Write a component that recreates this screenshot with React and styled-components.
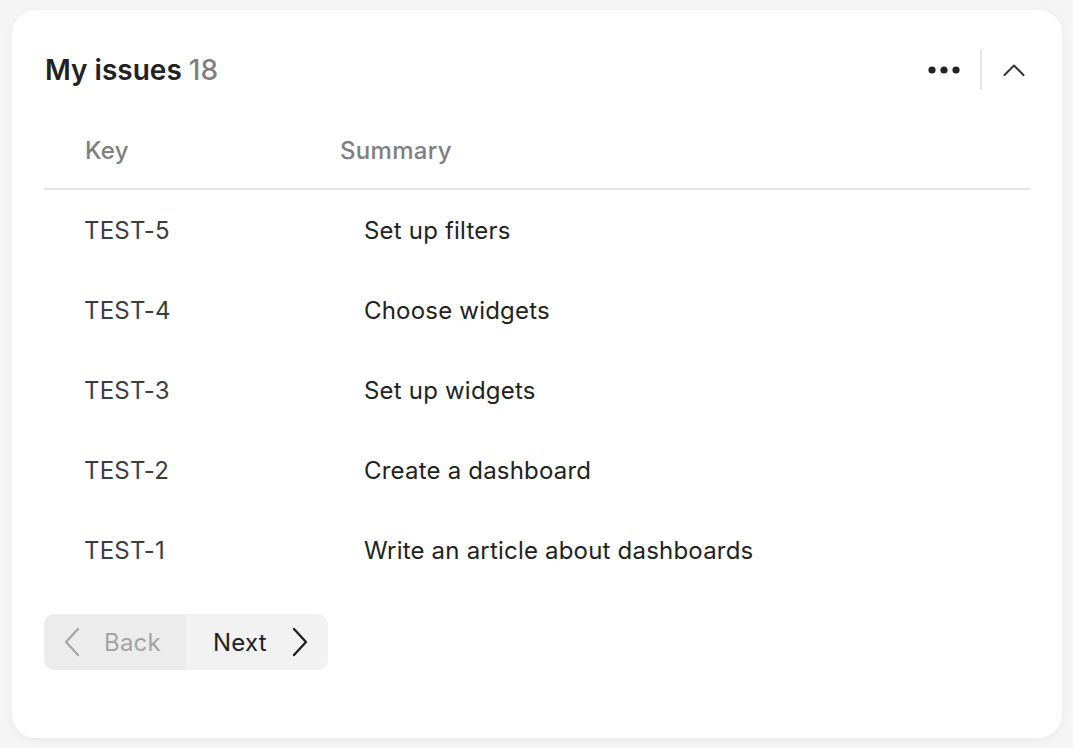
import React from "react";
import styled, { createGlobalStyle } from "styled-components";

const GlobalStyle = createGlobalStyle`
  html, body {
    margin: 0;
    padding: 0;
    background: #f5f5f5;
    font-family: Inter, "Noto Sans", sans-serif;
  }
  * {
    box-sizing: border-box;
  }
`;

const Page = styled.div`
  padding: 10px 11px 10px 12px;
  width: 1073px;
  height: 748px;
`;

const Card = styled.section`
  background: #fff;
  border-radius: 24px;
  box-shadow: 0 2px 10px rgba(0, 0, 0, 0.05);
  padding: 32px 32px 68px 32px;
  height: 728px;
`;

const Header = styled.header`
  display: flex;
  align-items: center;
  justify-content: space-between;
  height: 56px;
`;

const Title = styled.h2`
  margin: 0 0 0 1px;
  font-size: 28px;
  font-weight: 600;
  color: #222;
  letter-spacing: 0;
`;

const Count = styled.span`
  font-weight: 500;
  color: #7f7f7f;
`;

const Actions = styled.div`
  display: flex;
  align-items: center;
  height: 40px;
`;

const IconButton = styled.button`
  display: flex;
  align-items: center;
  justify-content: center;
  border: 0;
  background: transparent;
  padding: 0;
  width: ${({ $w }) => $w}px;
  height: 40px;
  cursor: pointer;
`;

const Separator = styled.div`
  width: 2px;
  height: 40px;
  background: #e6e6e6;
  margin: 0 16px;
`;

const Table = styled.div`
  margin-top: 14px;
  display: grid;
  grid-template-columns: 296px 1fr;
`;

const HeadCell = styled.div`
  height: 78px;
  display: flex;
  align-items: center;
  padding-left: ${({ $pad }) => $pad}px;
  font-size: 24px;
  font-weight: 500;
  letter-spacing: 0.3px;
  color: #7f7f7f;
  border-bottom: 2px solid #e5e5e5;
`;

const Cell = styled.div`
  height: 80px;
  display: flex;
  align-items: center;
  padding-left: ${({ $pad }) => $pad}px;
  font-size: 24px;
  letter-spacing: 0.2px;
  color: ${({ $muted }) => ($muted ? "#3d3d3d" : "#222")};
`;

const Pager = styled.div`
  margin-top: 24px;
  display: inline-flex;
  height: 56px;
  border-radius: 10px;
  overflow: hidden;
`;

const PageButton = styled.button`
  display: flex;
  align-items: center;
  gap: ${({ $gap }) => $gap}px;
  height: 56px;
  width: 142px;
  border: 0;
  padding: ${({ $pad }) => $pad};
  font-family: inherit;
  font-size: 24px;
  letter-spacing: 0.2px;
  background: ${({ $disabled }) => ($disabled ? "#ececec" : "#f2f2f2")};
  color: ${({ $disabled }) => ($disabled ? "#a3a3a3" : "#222")};
  cursor: ${({ $disabled }) => ($disabled ? "default" : "pointer")};
`;

const rows = [
  ["TEST-5", "Set up filters"],
  ["TEST-4", "Choose widgets"],
  ["TEST-3", "Set up widgets"],
  ["TEST-2", "Create a dashboard"],
  ["TEST-1", "Write an article about dashboards"],
];

const Dots = () => (
  <svg width="32" height="8" viewBox="0 0 32 8">
    <circle cx="4" cy="4" r="3.6" fill="#222" />
    <circle cx="16" cy="4" r="3.6" fill="#222" />
    <circle cx="28" cy="4" r="3.6" fill="#222" />
  </svg>
);

const ChevronUp = () => (
  <svg width="22" height="14" viewBox="0 0 22 14" fill="none" stroke="#333" strokeWidth="2" strokeLinecap="round" strokeLinejoin="round">
    <path d="M1.5 12 L11 2.5 L20.5 12" />
  </svg>
);

const PageChevron = ({ dir, color }) => (
  <svg width="18" height="30" viewBox="0 0 18 30" fill="none" stroke={color} strokeWidth="2.4" strokeLinecap="round" strokeLinejoin="round">
    <path d={dir === "left" ? "M15 2 L3 15 L15 28" : "M3 2 L15 15 L3 28"} />
  </svg>
);

const App = () => {
  return (
    <>
      <GlobalStyle />
      <Page>
        <Card>
          <Header>
            <Title>
              My issues <Count>18</Count>
            </Title>
            <Actions>
              <IconButton $w={40} aria-label="More">
                <Dots />
              </IconButton>
              <Separator />
              <IconButton $w={32} aria-label="Collapse">
                <ChevronUp />
              </IconButton>
            </Actions>
          </Header>

          <Table>
            <HeadCell $pad={41}>Key</HeadCell>
            <HeadCell $pad={0}>Summary</HeadCell>
            {rows.map(([key, summary]) => (
              <React.Fragment key={key}>
                <Cell $pad={40} $muted>
                  {key}
                </Cell>
                <Cell $pad={24}>{summary}</Cell>
              </React.Fragment>
            ))}
          </Table>

          <Pager>
            <PageButton $disabled $gap={23} $pad="0 0 0 19px">
              <PageChevron dir="left" color="#a8a8a8" />
              Back
            </PageButton>
            <PageButton $gap={24} $pad="0 0 0 27px">
              Next
              <PageChevron dir="right" color="#222" />
            </PageButton>
          </Pager>
        </Card>
      </Page>
    </>
  );
};

export default App;
